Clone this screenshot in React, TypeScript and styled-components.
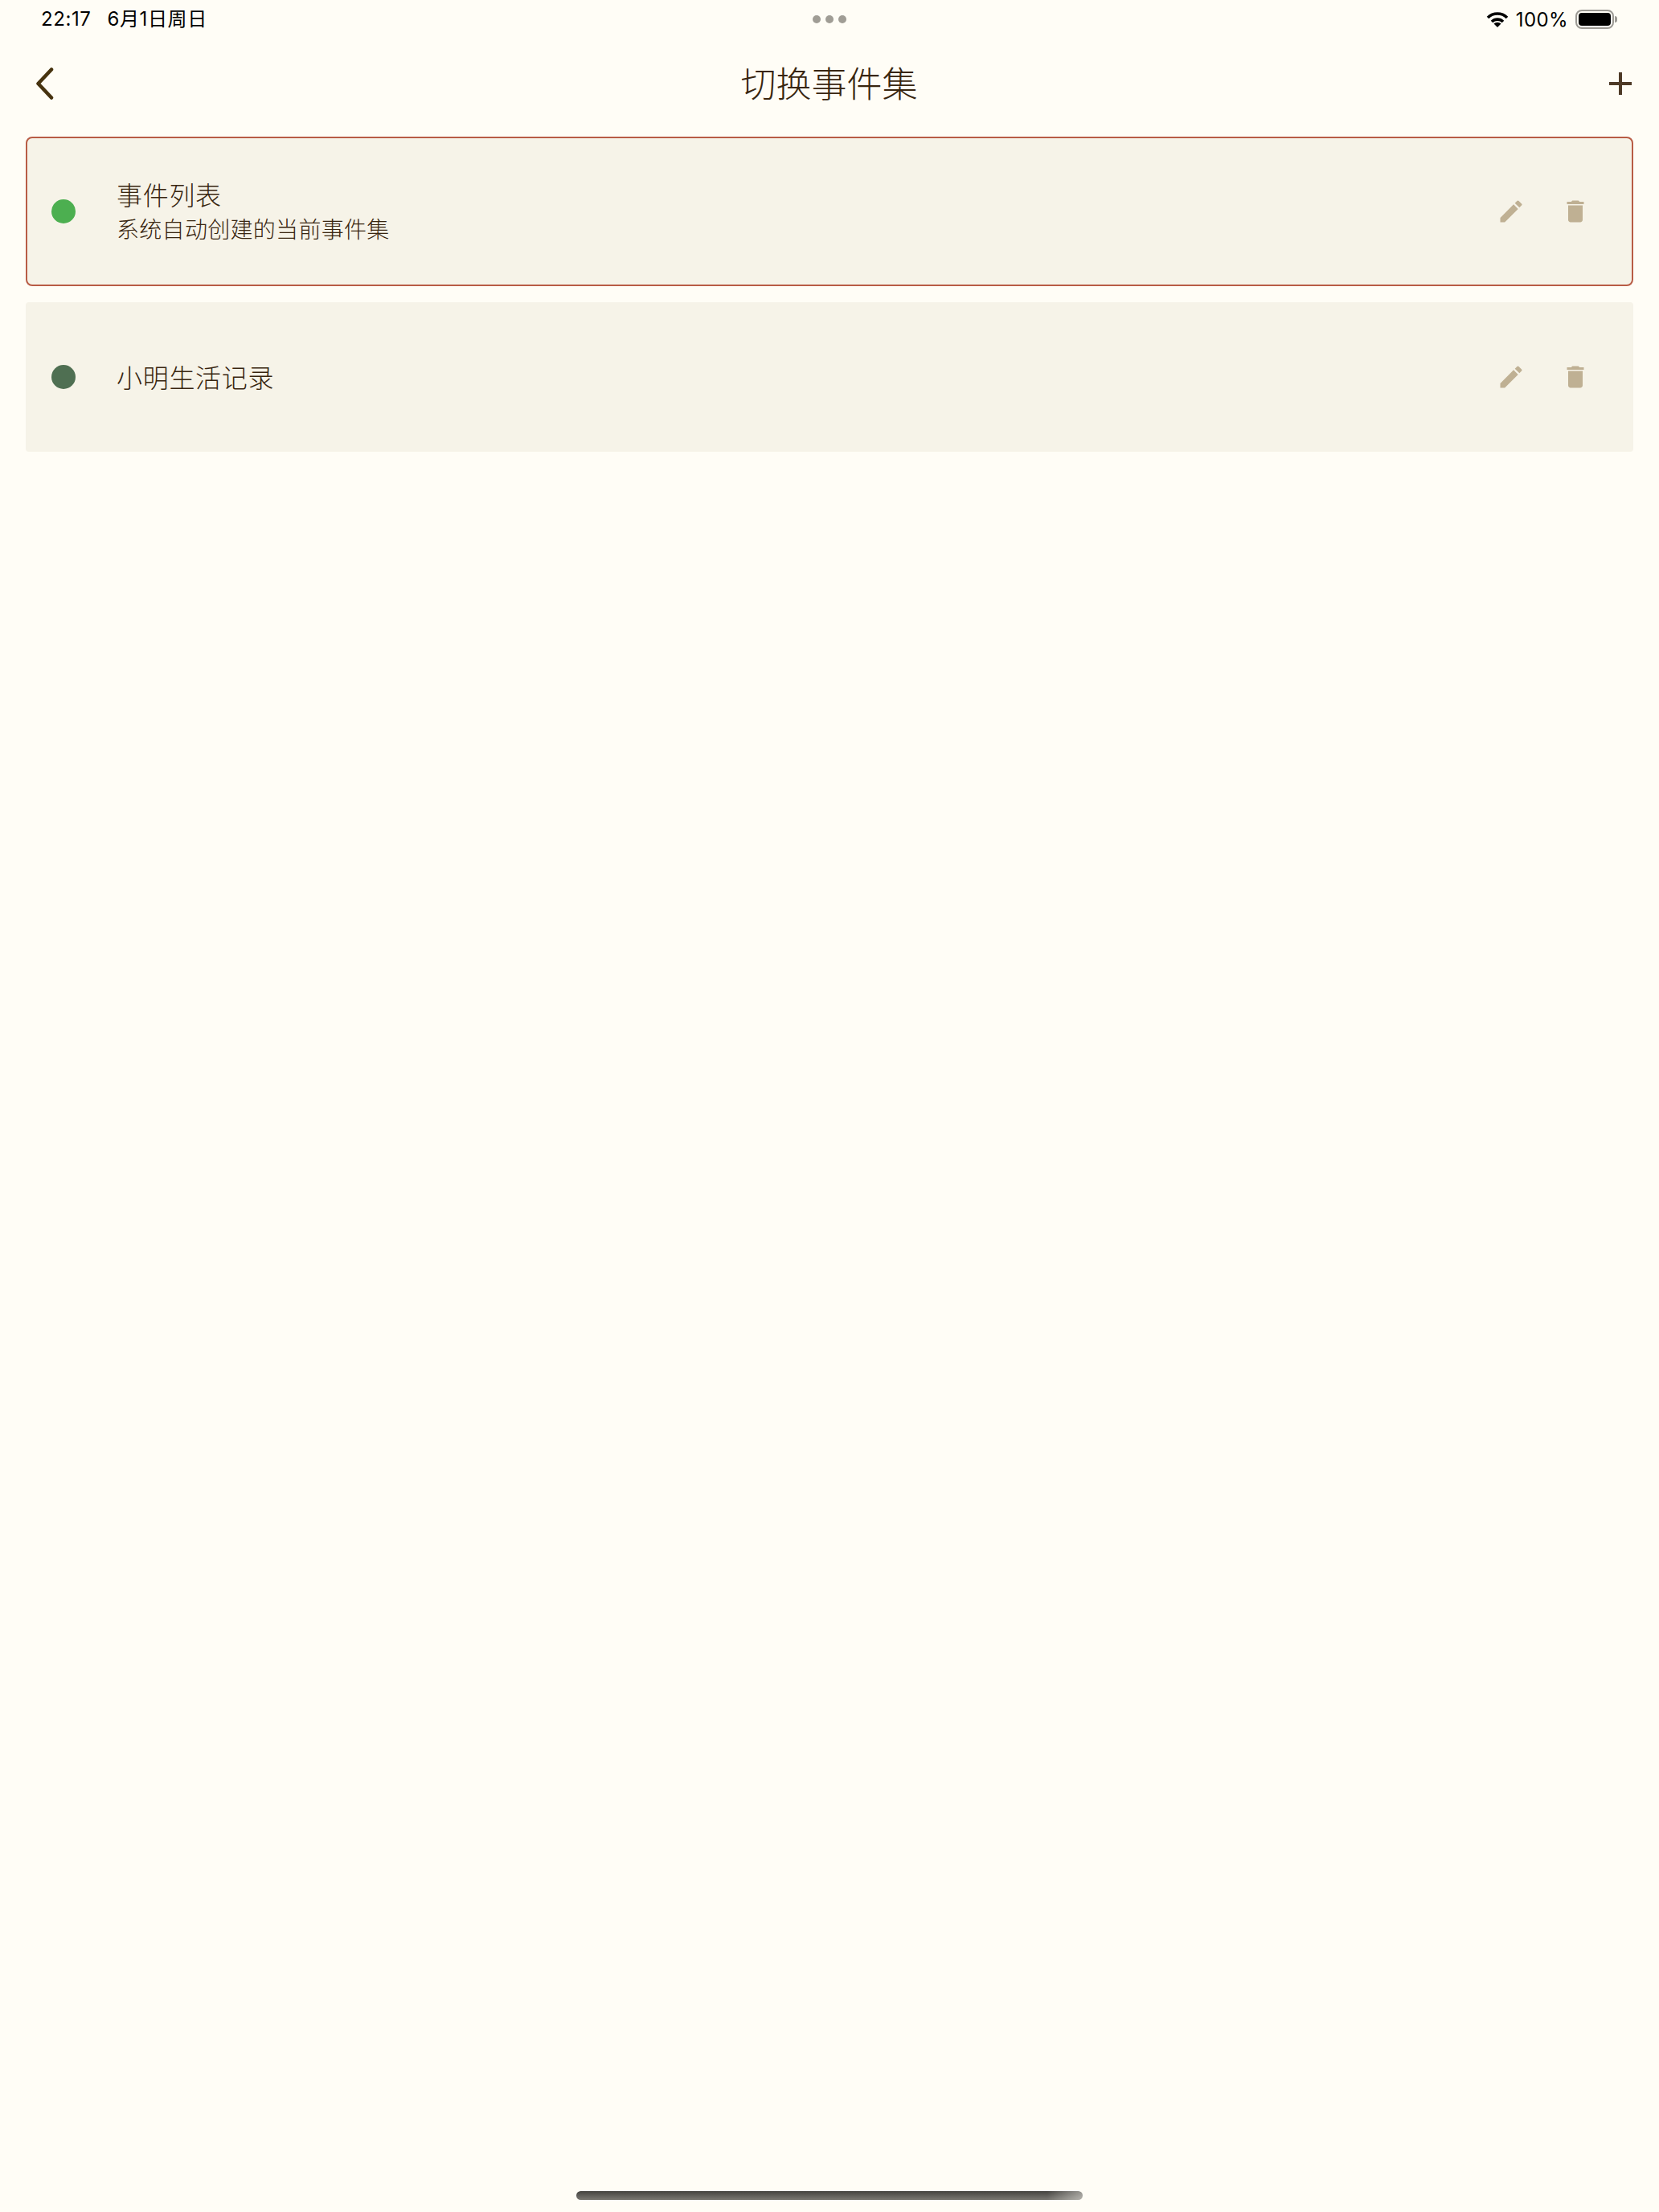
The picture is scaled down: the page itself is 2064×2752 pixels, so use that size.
import { createGlobalStyle } from 'styled-components';
import styled from 'styled-components';
import { MdDelete, MdEdit } from 'react-icons/md';

const cjk = '"Noto Sans CJK SC", "Noto Sans", sans-serif';

const GlobalStyle = createGlobalStyle`
    html, body {
        margin: 0;
        padding: 0;
        background: #fffdf6;
    }
`;

const Page = styled.div`
    display: flex;
    flex-direction: column;
    width: 2064px;
    height: 2752px;
    box-sizing: border-box;
    overflow: hidden;
    background: #fffdf6;
`;

const StatusBar = styled.div`
    display: grid;
    grid-template-columns: 1fr auto 1fr;
    align-items: center;
    height: 48px;
    padding: 0 52px 0 51px;
    color: #000;
    font-family: Inter, ${cjk};
    font-size: 24px;
`;

const StatusClock = styled.div`
    display: flex;
    gap: 20px;
    letter-spacing: .6px;
    line-height: 48px;
`;

const StatusDots = styled.div`
    display: flex;
    gap: 6px;
`;

const StatusDot = styled.span`
    width: 10px;
    height: 10px;
    border-radius: 50%;
    background: #a09d95;
`;

const StatusRight = styled.div`
    display: flex;
    justify-content: flex-end;
    align-items: center;
    gap: 9px;
    letter-spacing: .4px;
`;

const Battery = styled.div`
    display: flex;
    align-items: center;
    gap: 1px;
`;

const BatteryBody = styled.div`
    width: 48px;
    height: 24px;
    box-sizing: border-box;
    padding: 2px;
    border: 2px solid #9c9a94;
    border-radius: 8px;
`;

const BatteryFill = styled.div`
    width: 100%;
    height: 100%;
    border-radius: 4px;
    background: #000;
`;

const BatteryCap = styled.div`
    width: 3px;
    height: 8px;
    border-radius: 0 3px 3px 0;
    background: #9c9a94;
`;

const Header = styled.div`
    display: grid;
    grid-template-columns: 1fr auto 1fr;
    align-items: center;
    height: 112px;
    padding: 0 34px 0 45px;
`;

const Title = styled.h1`
    margin: -4px 0 0 -12px;
    color: #38250f;
    font-family: ${cjk};
    font-size: 44px;
    font-weight: 300;
    line-height: 56px;
`;

const HeaderIcon = styled.svg<{ $end?: boolean }>`
    display: block;
    width: 30px;
    height: 40px;
    justify-self: ${props => (props.$end ? 'end' : 'start')};
`;

const List = styled.div`
    display: flex;
    flex-direction: column;
    gap: 20px;
    padding: 10px 32px 0;
`;

const Card = styled.div<{ $active?: boolean }>`
    display: flex;
    align-items: center;
    height: 186px;
    box-sizing: border-box;
    padding: 0 30px;
    border: 2px solid ${props => (props.$active ? '#b85c45' : 'transparent')};
    border-radius: ${props => (props.$active ? '8px' : '4px')};
    background: #f6f3e8;
`;

const ColorDot = styled.span<{ $color: string }>`
    flex: none;
    width: 30px;
    height: 30px;
    border-radius: 50%;
    background: ${props => props.$color};
`;

const CardText = styled.div`
    flex: 1;
    display: flex;
    flex-direction: column;
    margin-left: 51px;
    margin-top: -3px;
    color: #38250f;
    font-family: ${cjk};
    font-weight: 300;
`;

const CardName = styled.div`
    font-size: 32px;
    letter-spacing: .7px;
    line-height: 44px;
`;

const CardNote = styled.div`
    margin-top: 1px;
    font-size: 28px;
    letter-spacing: .3px;
    line-height: 40px;
`;

const CardActions = styled.div`
    display: flex;
    gap: 44px;
    margin-right: 22px;
    color: #bfb093;
    font-size: 36px;

    svg {
        display: block;
    }
`;

const HomeBar = styled.div`
    align-self: center;
    width: 630px;
    height: 11px;
    margin-top: auto;
    margin-bottom: 15px;
    border-radius: 6px;
    background:
        linear-gradient(to right, rgba(255, 253, 246, 0) 93%, rgba(255, 253, 246, .45) 100%),
        linear-gradient(to bottom, #444340, #7a7873);
`;

const sets = [
    { name: '事件列表', note: '系统自动创建的当前事件集', color: '#4caf50', active: true },
    { name: '小明生活记录', color: '#4f6f52' },
];

const App = () => {
    return (
        <Page>
            <GlobalStyle />
            <StatusBar>
                <StatusClock>
                    <span>22:17</span>
                    <span>6月1日周日</span>
                </StatusClock>
                <StatusDots>
                    <StatusDot />
                    <StatusDot />
                    <StatusDot />
                </StatusDots>
                <StatusRight>
                    <svg width="28" height="19" viewBox="0 0 28 19">
                        <path d="M2 7A17 17 0 0 1 26 7" fill="none" stroke="#000" strokeWidth="3.600" />
                        <path d="M7 12A10 10 0 0 1 21 12" fill="none" stroke="#000" strokeWidth="3.600" />
                        <path d="M14 19L9.500 14.500A6.500 6.500 0 0 1 18.500 14.500Z" fill="#000" />
                    </svg>
                    <span>100%</span>
                    <Battery>
                        <BatteryBody>
                            <BatteryFill />
                        </BatteryBody>
                        <BatteryCap />
                    </Battery>
                </StatusRight>
            </StatusBar>
            <Header>
                <HeaderIcon viewBox="0 0 30 40">
                    <path d="M19 2.500 L2.500 20 L19 37.500" fill="none" stroke="#47330f" strokeWidth="4.500" strokeLinecap="round" strokeLinejoin="round" />
                </HeaderIcon>
                <Title>切换事件集</Title>
                <HeaderIcon $end viewBox="0 0 30 40">
                    <path d="M16 6 V34 M2 20 H30" fill="none" stroke="#4e3a26" strokeWidth="4" />
                </HeaderIcon>
            </Header>
            <List>
                {sets.map(set => (
                    <Card key={set.name} $active={set.active}>
                        <ColorDot $color={set.color} />
                        <CardText>
                            <CardName>{set.name}</CardName>
                            {set.note && <CardNote>{set.note}</CardNote>}
                        </CardText>
                        <CardActions>
                            <MdEdit />
                            <MdDelete />
                        </CardActions>
                    </Card>
                ))}
            </List>
            <HomeBar />
        </Page>
    );
};

export default App;
